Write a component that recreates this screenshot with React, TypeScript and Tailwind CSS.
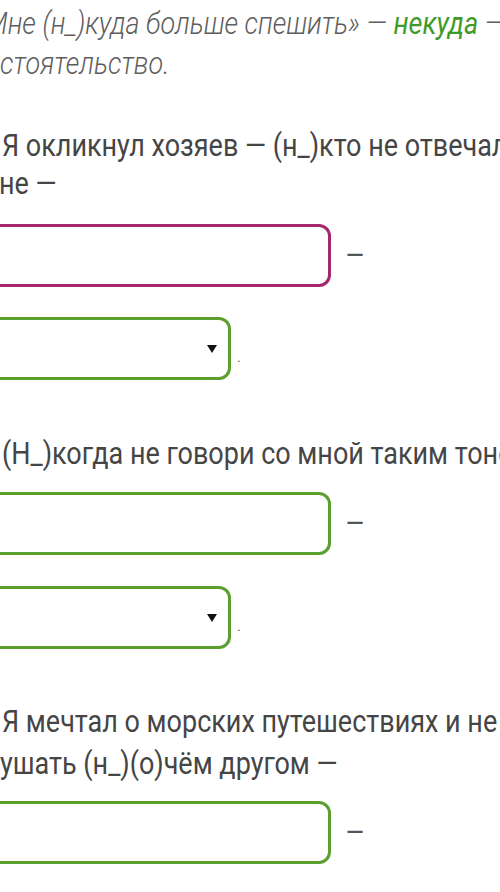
import React from "react";

const BODY = "text-[31px] text-[#454545] whitespace-nowrap origin-left scale-x-[0.87]";

function InputBox({ color }: { color: "pink" | "green" }) {
  const border = color === "pink" ? "border-[#a5276f]" : "border-[#5b9f2f]";
  return (
    <div className="flex items-center ml-[-40px]">
      <div className={`w-[371px] h-[63px] rounded-xl border-[3px] ${border} bg-white`} />
      <span className="ml-[14px] text-[31px] leading-none text-[#555]">–</span>
    </div>
  );
}

function SelectBox() {
  return (
    <div className="flex items-center ml-[-40px]">
      <div className="w-[271px] h-[63px] rounded-xl border-[3px] border-[#5b9f2f] bg-white flex items-center justify-end pr-[11px]">
        <svg width="10" height="8" viewBox="0 0 10 8">
          <path d="M0 0 L10 0 L5 8 Z" fill="#111" />
        </svg>
      </div>
      <span className="ml-[6px] mt-[16px] text-[14px] leading-none text-[#666]">.</span>
    </div>
  );
}

export default function App() {
  return (
    <div
      className="w-[500px] h-[892px] overflow-hidden bg-white"
      style={{ fontFamily: "Roboto, 'Noto Sans', sans-serif" }}
    >
      <div className="flex flex-col">
        <div className="mt-[4px] italic font-light text-[31px] leading-[40px] text-[#5e5e5e]">
          <div className="ml-[-15px] whitespace-nowrap origin-left scale-x-[0.87]">
            Мне (н_)куда больше спешить» — <span className="text-[#3f9a2a] font-normal">некуда</span> — обстоятельство
          </div>
          <div className="ml-[-29px] whitespace-nowrap origin-left scale-x-[0.87]">обстоятельство.</div>
        </div>

        <div className="mt-[43px] leading-[38px]">
          <div className={`ml-[2px] ${BODY}`}>Я окликнул хозяев — (н_)кто не отвечал мне</div>
          <div className={`ml-[-1px] ${BODY}`}>не —</div>
        </div>

        <div className="mt-[21px]">
          <InputBox color="pink" />
        </div>
        <div className="mt-[30px]">
          <SelectBox />
        </div>

        <div className="mt-[55px] leading-[38px]">
          <div className={`ml-[2px] ${BODY}`}>(Н_)когда не говори со мной таким тоном</div>
        </div>

        <div className="mt-[19px]">
          <InputBox color="green" />
        </div>
        <div className="mt-[31px]">
          <SelectBox />
        </div>

        <div className="mt-[52px] leading-[42px]">
          <div className={`ml-[2px] ${BODY}`}>Я мечтал о морских путешествиях и не хотел</div>
          <div className={`ml-[0px] ${BODY}`}>ушать (н_)(о)чём другом —</div>
        </div>

        <div className="mt-[16px]">
          <InputBox color="green" />
        </div>
      </div>
    </div>
  );
}
